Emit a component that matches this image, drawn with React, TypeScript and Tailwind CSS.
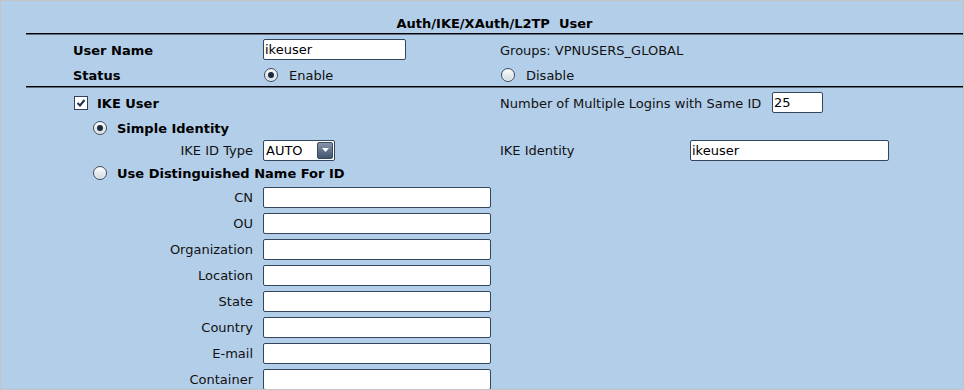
import React from 'react';

const Rule: React.FC = () => (
  <div className="h-[2px] border-t border-black bg-[#5d6d80]"></div>
);

const Radio: React.FC<{ checked?: boolean }> = ({ checked }) => (
  <span className="flex items-center justify-center w-[14px] h-[14px] rounded-full border border-[#3b4c60] bg-gradient-to-b from-white to-[#cfd6de] shadow-[inset_0_0_0_1px_#eef2f6]">
    {checked && <span className="w-[6px] h-[6px] rounded-full bg-[#1b2a3c]"></span>}
  </span>
);

const Checkbox: React.FC = () => (
  <span className="flex items-center justify-center w-[14px] h-[14px] border border-[#2d4060] bg-white">
    <svg width="10" height="10" viewBox="0 0 10 10">
      <path d="M1.5 5 L4 7.5 L8.5 2" fill="none" stroke="#1d2f4f" strokeWidth="2" />
    </svg>
  </span>
);

const TextBox: React.FC<{ width: string; value?: string }> = ({ width, value }) => (
  <div className={`${width} h-[21px] bg-white border border-[#34465b] rounded-[2px] flex items-center pl-[1px] pt-[1px] text-black`}>
    {value}
  </div>
);

const DN_FIELDS = ['CN', 'OU', 'Organization', 'Location', 'State', 'Country', 'E-mail', 'Container'];

const App: React.FC = () => {
  return (
    <div className="w-[964px] h-[390px] overflow-hidden border border-[#c4c4c4] bg-[#b3cee9] font-['DejaVu_Sans',sans-serif] text-[13px] leading-[16px] text-[#111]">
      <div className="pl-[25px]">
        <div className="h-[32px] pt-[15px] text-center font-bold text-black">Auth/IKE/XAuth/L2TP&nbsp; User</div>
        <Rule />

        <div className="flex items-center h-[29px]">
          <div className="w-[237px] pl-[47px] pt-[3px] font-bold text-black">User Name</div>
          <div className="w-[237px]">
            <TextBox width="w-[143px]" value="ikeuser" />
          </div>
          <div className="pt-[3px]">Groups: VPNUSERS_GLOBAL</div>
        </div>
        <div className="flex items-center h-[22px]">
          <div className="w-[237px] pl-[47px] pt-[2px] font-bold text-black">Status</div>
          <div className="w-[237px] flex items-center gap-[11px] pl-[1px]">
            <Radio checked />
            <span className="pt-[2px]">Enable</span>
          </div>
          <div className="flex items-center gap-[11px] pl-[1px]">
            <Radio />
            <span className="pt-[2px]">Disable</span>
          </div>
        </div>
        <Rule />

        <div className="flex items-center h-[29px]">
          <div className="w-[474px] pl-[48px] flex items-center gap-[9px]">
            <Checkbox />
            <span className="font-bold text-black pt-[2px]">IKE User</span>
          </div>
          <div className="w-[272px] pt-[2px]">Number of Multiple Logins with Same ID</div>
          <TextBox width="w-[51px]" value="25" />
        </div>
        <div className="flex items-center h-[21px] pl-[67px] gap-[10px]">
          <Radio checked />
          <span className="font-bold text-black pt-[2px]">Simple Identity</span>
        </div>
        <div className="flex items-center h-[24px]">
          <div className="w-[237px] text-right pr-[10px] pt-[2px]">IKE ID Type</div>
          <div className="w-[237px]">
            <div className="w-[72px] h-[21px] bg-white border border-[#34465b] rounded-[2px] flex items-center justify-between pl-[2px] pr-[1px] text-black">
              <span className="pt-[1px]">AUTO</span>
              <span className="w-[16px] h-[17px] rounded-[2px] border border-[#3a4a5e] bg-gradient-to-b from-[#8595aa] to-[#435670] flex items-center justify-center">
                <svg width="7" height="4" viewBox="0 0 7 4">
                  <path d="M0 0 H7 L3.5 4 Z" fill="#ffffff" />
                </svg>
              </span>
            </div>
          </div>
          <div className="w-[190px] pt-[2px]">IKE Identity</div>
          <TextBox width="w-[199px]" value="ikeuser" />
        </div>
        <div className="flex items-center h-[22px] pl-[67px] gap-[10px]">
          <Radio />
          <span className="font-bold text-black pt-[2px]">Use Distinguished Name For ID</span>
        </div>

        {DN_FIELDS.map((f) => (
          <div key={f} className="flex items-center h-[26px]">
            <div className="w-[237px] text-right pr-[10px] pt-[2px]">{f}</div>
            <TextBox width="w-[228px]" />
          </div>
        ))}
      </div>
    </div>
  );
};

export default App;
